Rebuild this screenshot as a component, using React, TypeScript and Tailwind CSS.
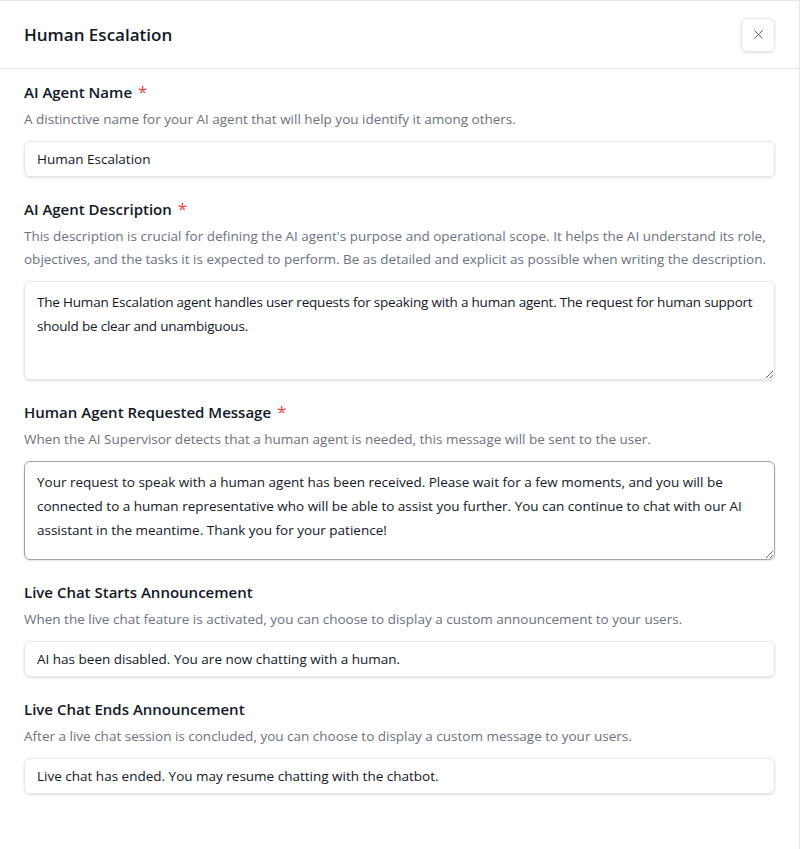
import React from 'react';
import { X } from 'lucide-react';

const font = { fontFamily: '"Open Sans", "Noto Sans", sans-serif' };

function Field({
    label,
    required,
    description,
    children,
}: { label: string, required?: boolean, description: string, children: React.ReactNode }) {
    return (
        <div className="flex flex-col">
            <div className="flex items-center gap-[6px] text-[15px] leading-6 font-semibold text-[#111827]">
                <span>{label}</span>
                {required && <span className="text-[#ef4444] text-[17px] leading-6 font-normal">*</span>}
            </div>
            <p className="mt-1 text-[13.5px] leading-[23px] text-[#6b7280]">{description}</p>
            <div className="mt-[10px]">{children}</div>
        </div>
    );
}

export default function App() {
    return (
        <div className="min-h-[849px] bg-white border-t border-r border-[#e5e7eb] text-[#111827]" style={font}>
            {/* Header */}
            <div className="flex items-center justify-between h-[68px] px-6 border-b border-[#e5e7eb]">
                <h2 className="text-[17px] font-semibold text-[#111827]">Human Escalation</h2>
                <button className="w-[34px] h-[34px] flex items-center justify-center rounded-md border border-[#e5e7eb] shadow-sm text-[#4b5563]">
                    <X size={15} strokeWidth={1.5} />
                </button>
            </div>

            {/* Body */}
            <div className="px-6 pt-[11px] flex flex-col gap-5">
                <Field label="AI Agent Name" required description="A distinctive name for your AI agent that will help you identify it among others.">
                    <input
                        className="w-full h-9 px-3 rounded-md border border-[#e5e7eb] shadow-sm text-[13.5px] text-[#111827] outline-none"
                        defaultValue="Human Escalation"
                    />
                </Field>

                <Field label="AI Agent Description" required description="This description is crucial for defining the AI agent's purpose and operational scope. It helps the AI understand its role, objectives, and the tasks it is expected to perform. Be as detailed and explicit as possible when writing the description.">
                    <textarea
                        className="block w-full h-[99px] px-3 py-2 rounded-md border border-[#e5e7eb] shadow-sm text-[13.5px] leading-6 tracking-[-0.2px] text-[#111827] outline-none"
                        defaultValue="The Human Escalation agent handles user requests for speaking with a human agent. The request for human support should be clear and unambiguous."
                    />
                </Field>

                <Field label="Human Agent Requested Message" required description="When the AI Supervisor detects that a human agent is needed, this message will be sent to the user.">
                    <textarea
                        className="block w-full h-[99px] px-3 py-2 rounded-md border border-[#a3a3a3] shadow-sm text-[13.5px] leading-6 text-[#111827] outline-none"
                        defaultValue="Your request to speak with a human agent has been received. Please wait for a few moments, and you will be connected to a human representative who will be able to assist you further. You can continue to chat with our AI assistant in the meantime. Thank you for your patience!"
                    />
                </Field>

                <Field label="Live Chat Starts Announcement" description="When the live chat feature is activated, you can choose to display a custom announcement to your users.">
                    <input
                        className="w-full h-9 px-3 rounded-md border border-[#e5e7eb] shadow-sm text-[13.5px] text-[#111827] outline-none"
                        defaultValue="AI has been disabled. You are now chatting with a human."
                    />
                </Field>

                <Field label="Live Chat Ends Announcement" description="After a live chat session is concluded, you can choose to display a custom message to your users.">
                    <input
                        className="w-full h-9 px-3 rounded-md border border-[#e5e7eb] shadow-sm text-[13.5px] text-[#111827] outline-none"
                        defaultValue="Live chat has ended. You may resume chatting with the chatbot."
                    />
                </Field>
            </div>
        </div>
    );
}
